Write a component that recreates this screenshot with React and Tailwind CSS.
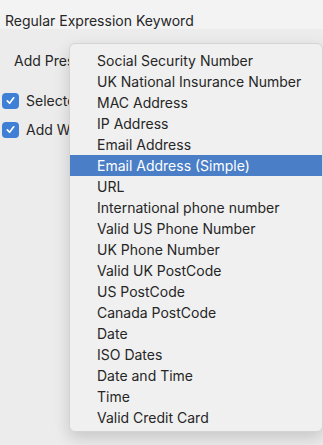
import React from "react";

const items = [
  "Social Security Number",
  "UK National Insurance Number",
  "MAC Address",
  "IP Address",
  "Email Address",
  "Email Address (Simple)",
  "URL",
  "International phone number",
  "Valid US Phone Number",
  "UK Phone Number",
  "Valid UK PostCode",
  "US PostCode",
  "Canada PostCode",
  "Date",
  "ISO Dates",
  "Date and Time",
  "Time",
  "Valid Credit Card",
];

function Check() {
  return (
    <div className="w-[17px] h-[16px] rounded-[4px] bg-[#3f7fd6] flex items-center justify-center shrink-0">
      <svg width="11" height="11" viewBox="0 0 12 12" fill="none">
        <path d="M2.5 6.5 L5 9 L9.5 3" stroke="white" strokeWidth="1.8" strokeLinecap="round" strokeLinejoin="round" />
      </svg>
    </div>
  );
}

export default function App() {
  return (
    <div
      className="relative w-[323px] h-[445px] overflow-hidden bg-[#ececec] text-[#262626] text-[14px]"
      style={{ fontFamily: "Inter, 'Liberation Sans', sans-serif" }}
    >
      <div className="h-[29px] bg-[#f3f3f3] flex items-center pl-[5px] pt-[11px]">
        Regular Expression Keyword
      </div>
      <div className="mt-[21px] ml-[14px] h-[21px] w-[55px] overflow-hidden whitespace-nowrap flex items-center">
        Add Preset:
      </div>
      <div className="flex flex-col gap-[12px] pl-[2px] mt-[21px]">
        <div className="flex items-center gap-[7px] h-[17px]">
          <Check />
          <span className="w-[43px] overflow-hidden whitespace-nowrap">Selected text only</span>
        </div>
        <div className="flex items-center gap-[7px] h-[17px]">
          <Check />
          <span className="w-[43px] overflow-hidden whitespace-nowrap">Add Word Boundaries</span>
        </div>
      </div>

      <div className="absolute left-[69px] top-[43px] w-[254px] h-[389px] bg-[#f0f0f0] rounded-[6px] border border-[#d4d4d4] shadow-[0_6px_16px_rgba(0,0,0,0.16)] pt-[6px] pb-[5px]">
        {items.map((t, i) => (
          <div
            key={t}
            className={
              "h-[21px] flex items-center pl-[27px] " +
              (i === 5 ? "bg-[#4a7ec6] text-white" : "")
            }
          >
            {t}
          </div>
        ))}
      </div>
    </div>
  );
}
